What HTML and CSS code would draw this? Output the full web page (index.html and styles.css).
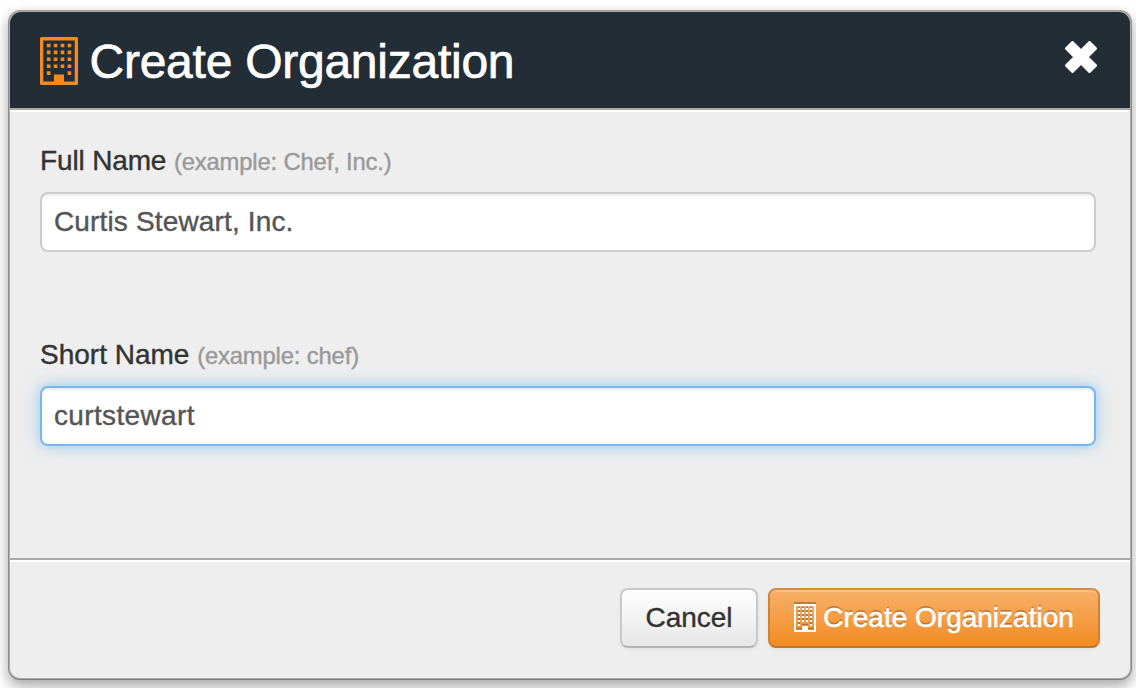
FILE: index.html
```html
<!DOCTYPE html>
<html lang="en">
<head>
<meta charset="utf-8">
<title>Create Organization</title>
<link rel="stylesheet" href="styles.css">
</head>
<body>
<svg width="0" height="0" class="defs">
  <symbol id="building" viewBox="0 0 38 48">
    <path fill="currentColor" fill-rule="evenodd" d="M1.5 0h35Q38 0 38 1.5v45q0 1.500-1.500 1.500h-35Q0 48 0 46.500v-45Q0 0 1.500 0zM3.300 3.500v41H14V37.500h10v7h10.700v-41z"/>
    <path fill="none" stroke="currentColor" stroke-width="3.600" stroke-dasharray="3.600 3.300" d="M6.900 8.500h24.300M6.900 15.400h24.300M6.900 22.300h24.300M6.900 29.200h24.300M6.900 36.100h3.600M27.600 36.100h3.600"/>
  </symbol>
</svg>
<form class="modal">
  <header class="modal-header">
    <svg class="title-icon"><use href="#building"/></svg>
    <h1 class="title">Create Organization</h1>
    <button type="button" class="close" aria-label="Close">
      <svg class="close-icon" viewBox="0 0 32 32"><path d="M7.500 1.500L16 10L24.500 1.500L30.500 7.500L22 16L30.500 24.500L24.500 30.500L16 22L7.500 30.500L1.500 24.500L10 16L1.500 7.500Z"/></svg>
    </button>
  </header>
  <div class="modal-body">
    <div class="field">
      <label class="label full" for="full">Full Name <small class="hint">(example: Chef, Inc.)</small></label>
      <input class="input" id="full" type="text" value="Curtis Stewart, Inc.">
    </div>
    <div class="field">
      <label class="label" for="short">Short Name <small class="hint">(example: chef)</small></label>
      <input class="input active" id="short" type="text" value="curtstewart">
    </div>
  </div>
  <footer class="modal-footer">
    <button type="button" class="btn">Cancel</button>
    <button type="button" class="btn primary"><svg class="btn-icon"><use href="#building"/></svg>Create Organization</button>
  </footer>
</form>
</body>
</html>
```
FILE: styles.css
```css
* { box-sizing: border-box; }
body {
  margin: 0;
  height: 688px;
  padding: 10px 4px 8px 8px;
  overflow: hidden;
  background: #fff;
  font-family: "Liberation Sans", Arial, sans-serif;
  font-size: 28px;
  color: #333;
}
.defs { display: block; height: 0; }
.modal {
  display: flex;
  flex-direction: column;
  height: 670px;
  border: 2px solid rgba(0, 0, 0, .33);
  border-radius: 12px;
  background: #eee;
  background-clip: padding-box;
  box-shadow: 0 6px 14px rgba(0, 0, 0, .35);
}
.modal-header {
  display: flex;
  height: 98px;
  padding: 25px 33px 0 30px;
  background: #232d36;
  border-radius: 11px 11px 0 0;
  color: #fff;
}
.title-icon { width: 38px; height: 48px; color: #f18b21; }
.title {
  margin: -3px auto 0 11.5px;
  font-size: 48px;
  font-weight: 400;
  line-height: 56px;
  letter-spacing: -.25px;
  white-space: nowrap;
  -webkit-text-stroke: .7px #fff;
}
.close { width: 32px; height: 32px; margin-top: 4px; padding: 0; border: 0; background: none; }
.close-icon {
  display: block;
  width: 32px;
  height: 32px;
  fill: #fff;
  stroke: #fff;
  stroke-width: 3px;
  stroke-linejoin: round;
}
.modal-header { border-bottom: 2px solid #aaa; }
.modal-body {
  display: flex;
  flex-direction: column;
  gap: 56px;
  height: 448px;
  padding: 30px 34px 0 30px;
  border-top: 2px solid #fff;
}
.field { display: flex; flex-direction: column; gap: 12px; height: 138px; }
.label { height: 38px; line-height: 37px; white-space: nowrap; }
.full { letter-spacing: -.15px; }
.hint { font-size: 23.8px; letter-spacing: -.15px; color: #999; }
.label, .input, .btn { -webkit-text-stroke: .4px currentColor; }
.input {
  height: 60px;
  padding: 0 12px;
  border: 2px solid #ccc;
  border-radius: 8px;
  background: #fff;
  box-shadow: inset 0 2px 2px rgba(0, 0, 0, .075);
  color: #555;
  font: inherit;
  letter-spacing: .15px;
  outline: 0;
}
.input.active {
  border-color: #75b9f0;
  box-shadow: inset 0 2px 2px rgba(0, 0, 0, .075), 0 0 16px rgba(82, 168, 236, .6);
  letter-spacing: .35px;
}
.modal-footer {
  flex: 1;
  display: flex;
  justify-content: flex-end;
  gap: 10px;
  padding: 28px 30px 0;
  border-top: 2px solid #aaa;
  border-radius: 0 0 10px 10px;
  box-shadow: inset 0 2px 0 #fff;
}
.modal-footer { border-top-left-radius: 0; }
.btn {
  display: flex;
  align-items: center;
  justify-content: center;
  width: 138px;
  height: 60px;
  padding: 0;
  border: 2px solid #c9c9c9;
  border-bottom-color: #b3b3b3;
  border-radius: 8px;
  background: linear-gradient(#fff, #e6e6e6);
  box-shadow: inset 0 2px 0 rgba(255, 255, 255, .2), 0 2px 4px rgba(0, 0, 0, .05);
  color: #333;
  font: inherit;
  text-shadow: 0 2px 2px rgba(255, 255, 255, .75);
  white-space: nowrap;
}
.primary {
  width: 332px;
  border-color: #d98a3c #d08132 #b9752f;
  background: linear-gradient(#f8b06a, #f18b21);
  color: #fff;
  text-shadow: 0 -2px 0 rgba(0, 0, 0, .25);
  -webkit-text-stroke: .6px #fff;
}
.btn-icon {
  width: 22px;
  height: 28px;
  margin: -1px 7px 0 0;
  filter: drop-shadow(0 -2px 0 rgba(0, 0, 0, .25));
}
```
